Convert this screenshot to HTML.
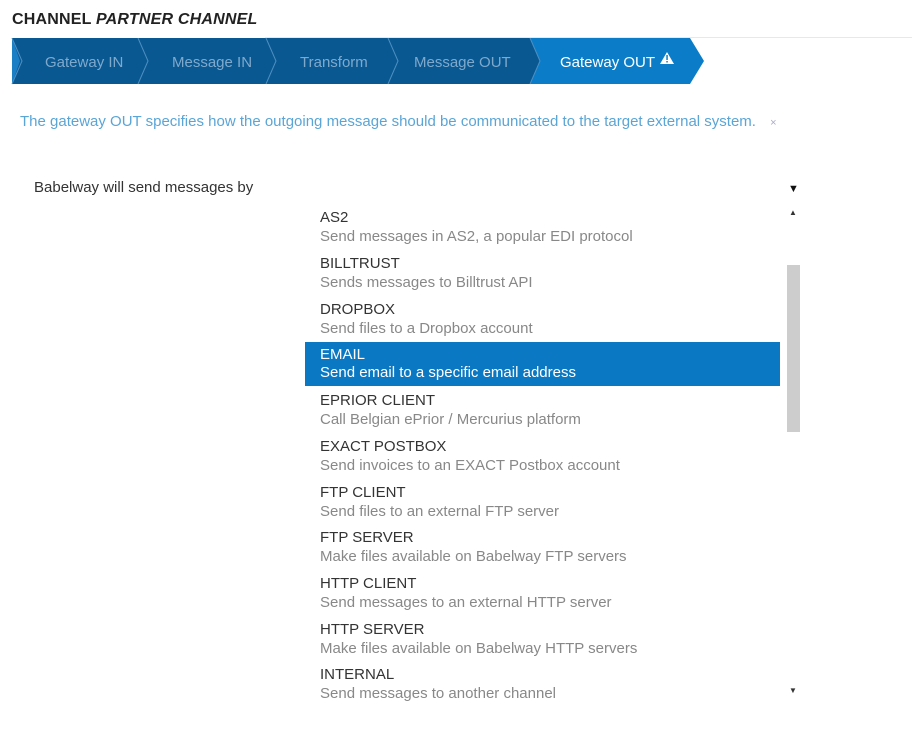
<!DOCTYPE html>
<html><head><style>
body{margin:0;width:912px;height:742px;background:#fff;font-family:"Liberation Sans",sans-serif;position:relative;overflow:hidden}
.abs{position:absolute}
.it{position:absolute;left:305px;width:475px;height:45px}
.it .t{position:absolute;left:15px;top:2px;font-size:15px;color:#333}
.it .d{position:absolute;left:15px;top:21px;font-size:15px;color:#888}
.sel{background:#0b78c4}
.sel .t,.sel .d{color:#fff}
</style></head><body>
<div class="abs" style="left:12px;top:11px;font-size:16px;font-weight:bold;color:#222;letter-spacing:0.2px">CHANNEL <i>PARTNER CHANNEL</i></div>
<div class="abs" style="left:265px;top:37px;width:647px;height:1px;background:#e8e8e8"></div>
<svg class="abs" style="left:0;top:38px" width="720" height="48">
<polygon points="12,0 530,0 540,23 530,46 12,46" fill="#095892"/>
<polygon points="530,0 690,0 704,23 690,46 530,46 540,23" fill="#0b7dc8"/>
<polygon points="12,0 20,23 12,46" fill="#1a7fc4"/>
<g stroke="#4d8fc0" stroke-width="1" fill="none">
<polyline points="12,0 22,23 12,46"/>
<polyline points="138,0 148,23 138,46"/>
<polyline points="266,0 276,23 266,46"/>
<polyline points="388,0 398,23 388,46"/>
<polyline points="530,0 540,23 530,46"/>
</g>
<g font-family="Liberation Sans" font-size="15" fill="#7fa9cc">
<text x="45" y="29">Gateway IN</text>
<text x="172" y="29">Message IN</text>
<text x="300" y="29">Transform</text>
<text x="414" y="29">Message OUT</text>
</g>
<text x="560" y="29" font-family="Liberation Sans" font-size="15" fill="#fff">Gateway OUT</text>
<polygon points="667,14 674,26 660,26" fill="#fff"/>
<rect x="666.3" y="17" width="1.5" height="5" fill="#0b7dc8"/><rect x="666.3" y="23" width="1.5" height="1.5" fill="#0b7dc8"/>
</svg>
<div class="abs" style="left:20px;top:113px;font-size:15px;color:#5aa5d6">The gateway OUT specifies how the outgoing message should be communicated to the target external system. <span style="margin-left:10px;color:#aac;font-size:11px">×</span></div>
<div class="abs" style="left:34px;top:179px;font-size:15px;color:#333">Babelway will send messages by</div>
<div class="abs" style="left:788px;top:183px;font-size:11px;color:#111">▼</div>
<div class="abs" style="left:789px;top:208px;font-size:8px;color:#333">▲</div>
<div class="abs" style="left:789px;top:686px;font-size:8px;color:#333">▼</div>
<div class="abs" style="left:787px;top:265px;width:13px;height:167px;background:#cdcdcd"></div>
<div class="it" style="top:207px"><div class="t">AS2</div><div class="d">Send messages in AS2, a popular EDI protocol</div></div>
<div class="it" style="top:253px"><div class="t">BILLTRUST</div><div class="d">Sends messages to Billtrust API</div></div>
<div class="it" style="top:299px"><div class="t">DROPBOX</div><div class="d">Send files to a Dropbox account</div></div>
<div class="it sel" style="top:342px;height:44px"><div class="t" style="top:4px">EMAIL</div><div class="d" style="top:22px">Send email to a specific email address</div></div>
<div class="it" style="top:390px"><div class="t">EPRIOR CLIENT</div><div class="d">Call Belgian ePrior / Mercurius platform</div></div>
<div class="it" style="top:436px"><div class="t">EXACT POSTBOX</div><div class="d">Send invoices to an EXACT Postbox account</div></div>
<div class="it" style="top:482px"><div class="t">FTP CLIENT</div><div class="d">Send files to an external FTP server</div></div>
<div class="it" style="top:527px"><div class="t">FTP SERVER</div><div class="d">Make files available on Babelway FTP servers</div></div>
<div class="it" style="top:573px"><div class="t">HTTP CLIENT</div><div class="d">Send messages to an external HTTP server</div></div>
<div class="it" style="top:619px"><div class="t">HTTP SERVER</div><div class="d">Make files available on Babelway HTTP servers</div></div>
<div class="it" style="top:664px"><div class="t">INTERNAL</div><div class="d">Send messages to another channel</div></div>
</body></html>
